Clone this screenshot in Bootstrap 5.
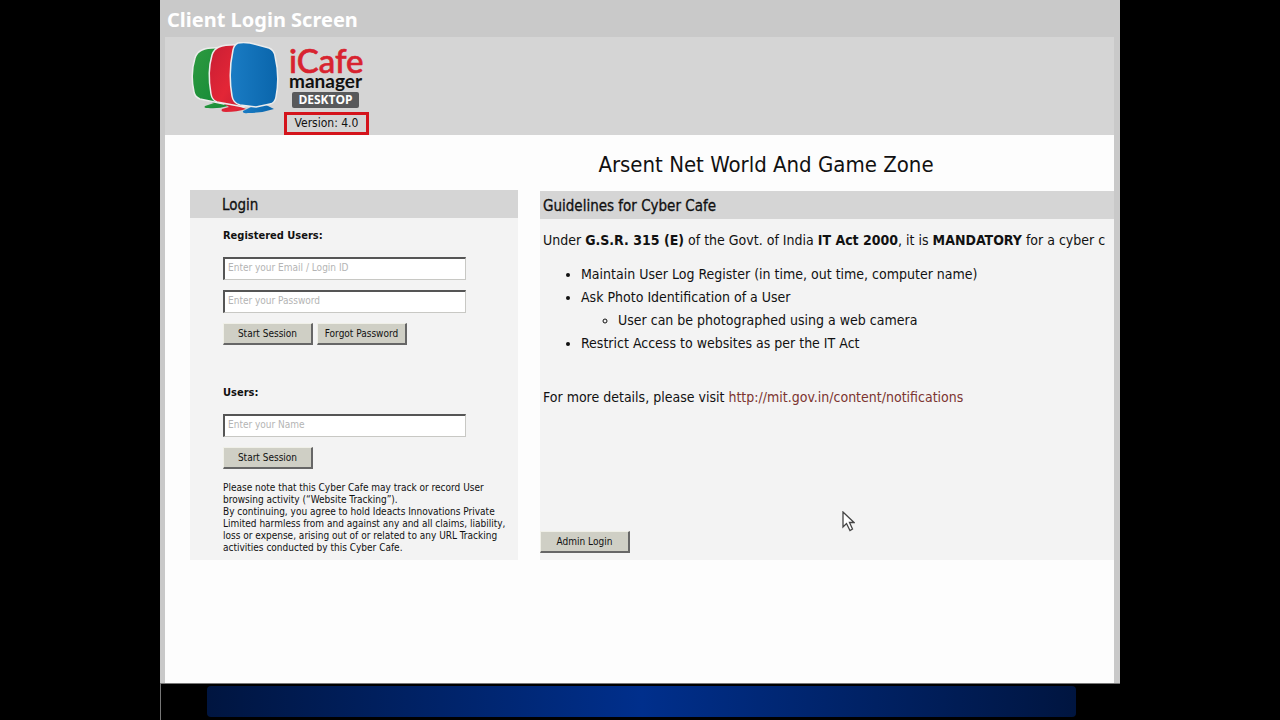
<!DOCTYPE html>
<html lang="en">
<head>
<meta charset="utf-8">
<meta name="viewport" content="width=device-width, initial-scale=1">
<title>iCafe Manager - Client Login Screen</title>
<link href="https://cdn.jsdelivr.net/npm/bootstrap@5.3.0/dist/css/bootstrap.min.css" rel="stylesheet">
<style>
  body { background: #000; color: #111; font: 10px/12px "DejaVu Sans Condensed", "DejaVu Sans", sans-serif; }
  .client { background: #fdfdfd; border: solid #c9c9c9; border-width: 0 6px 0 5px; }
  .client-title { background: #c9c9c9; color: #fff; font: bold 20px/24px "Noto Sans", sans-serif; padding: 8px 2px 5px; margin: 0; }
  .brand-bar { background: #d5d5d5; padding: 5px 25px 0; height: 98px; gap: 2px; }
  .brand-copy { padding: 4px 0 4px 5px; }
  .brand-red { color: #d8232f; font: 500 33px/28px "Lato", sans-serif; -webkit-text-stroke: 0.6px; }
  .brand-name { font: bold 19px/14px "Lato", sans-serif; }
  .edition { background: #58595b; color: #fff; font: bold 12px/16px "Open Sans", sans-serif; border-radius: 2px; width: 67px; margin: 4px 0 0 3px; }
  .version { border: 3px solid #d4141c; width: 85px; height: 23px; line-height: 17px; font-size: 12px; }
  .work { padding: 14px 0 0 25px; min-height: 548px; gap: 22px; }
  .shop { font-size: 22px; line-height: 32px; margin: 0 122px 10px 0; }
  .panel { background: #f3f3f3; }
  .panel-title { background: #d5d5d5; font-size: 15px; line-height: 26px; margin: 0; padding: 2px 0 0 3px; -webkit-text-stroke: 0.3px; font-weight: 400; }
  .login-panel { width: 328px; margin-top: 41px; }
  .login-panel .panel-title { padding-left: 32px; }
  .login-body { height: 342px; padding: 10px 0 0 33px; }
  .login-body form { display: flex; flex-direction: column; align-items: flex-start; gap: 10px; }
  .login-body form + form { margin-top: 40px; }
  .group-title { font-size: 11px; line-height: 16px; font-weight: bold; margin-bottom: 3px; }
  .note { margin: 13px 0 0; white-space: nowrap; }
  .field { width: 243px; height: 23px; border: 1px solid #c8c8c4; border-top: 2px solid #555; border-left: 2px solid #555; background: #fff; font: inherit; padding: 0 3px 3px; border-radius: 0; }
  .field::placeholder { color: #b4b4b4; opacity: 1; }
  .key { width: 90px; height: 22px; border: 1px solid #f0f0e8; border-right: 2px solid #666; border-bottom: 2px solid #666; border-radius: 0; background: #cfcfc5; color: #111; font: 10px/12px "DejaVu Sans Condensed", "DejaVu Sans", sans-serif; padding: 0; white-space: nowrap; }
  .guides { height: 341px; padding: 11px 0 7px; font-size: 14px; line-height: 20px; overflow: hidden; white-space: nowrap; }
  .guides .body-copy { padding-left: 3px; }
  .guides ul { line-height: 23px; }
  .guides ul.rules { padding-left: 38px; margin: 13px 0 32px; }
  .guides ul ul { padding-left: 37px; }
  .guides a { color: #7c3430; text-decoration: none; }
  .dock { border-top: 1px solid #777; border-left: 1px solid #777; padding: 2px 44px 3px 46px; background: #000; }
  .dock-bar { height: 31px; border-radius: 4px; background: linear-gradient(90deg, #001540, #002f8c 50%, #001540); }
  .pointer { left: 682px; top: 511px; }
</style>
</head>
<body>
<div class="container-fluid p-0">
  <div class="col-9 mx-auto position-relative">
    <main class="client">
      <h1 class="client-title">Client Login Screen</h1>
      <header class="brand-bar d-flex">
        <svg width="92" height="74" viewBox="0 0 92 74" aria-hidden="true">
          <defs>
            <linearGradient id="g" x2="1" y2="1"><stop stop-color="#2f9a40"/><stop offset="1" stop-color="#128a36"/></linearGradient>
            <linearGradient id="r" x2="1" y2="1"><stop stop-color="#c81e34"/><stop offset=".6" stop-color="#e32636"/><stop offset="1" stop-color="#c81e34"/></linearGradient>
            <linearGradient id="b"><stop stop-color="#1a7cc4"/><stop offset="1" stop-color="#0a65ab"/></linearGradient>
          </defs>
          <g stroke="#ececec" stroke-width="1.500" stroke-linejoin="round">
            <path fill="url(#g)" stroke="none" d="M19 59L24 61 15 64Q13 66 18 66 28 67 38 64L30 60Z"/>
            <path fill="url(#g)" d="M12 8Q18 5 34 6V62L10 57Q5 55 4 50Q0 32 5 16Q7 10 12 8Z"/>
            <path fill="url(#r)" stroke="none" d="M34 62L39 65 32 67Q30 70 36 70 47 70 56 67L46 63Z"/>
            <path fill="url(#r)" d="M29 5Q36 2 54 3V65L27 60Q22 58 21 52Q17 30 22 13Q24 7 29 5Z"/>
            <path fill="url(#b)" stroke="none" d="M58 62L61 65 53 69Q52 72 58 71 72 71 84 67L74 62Z"/>
            <path fill="url(#b)" d="M48 1Q53 0 60 1L79 6Q84 8 85 14Q90 35 86 55Q85 61 80 62L66 65 50 63Q43 61 42 54Q38 31 43 8Q44 3 48 1Z"/>
          </g>
        </svg>
        <div>
          <div class="brand-copy">
            <div class="brand-red">iCafe</div>
            <div class="brand-name">manager</div>
            <div class="edition text-center">DESKTOP</div>
          </div>
          <div class="version text-center">Version: 4.0</div>
        </div>
      </header>
      <div class="work d-flex">
        <section class="login-panel panel flex-shrink-0 align-self-start">
          <h2 class="panel-title">Login</h2>
          <div class="login-body">
            <form>
              <div class="group-title">Registered Users:</div>
              <input class="field" type="text" placeholder="Enter your Email / Login ID" aria-label="Email or login ID">
              <input class="field" type="password" placeholder="Enter your Password" aria-label="Password">
              <div class="d-flex gap-1"><button class="key" type="button">Start Session</button><button class="key" type="button">Forgot Password</button></div>
            </form>
            <form>
              <label class="group-title" for="guest">Users:</label>
              <input class="field" id="guest" type="text" placeholder="Enter your Name">
              <button class="key" type="button">Start Session</button>
            </form>
            <p class="note">Please note that this Cyber Cafe may track or record User<br>browsing activity (“Website Tracking”).<br>By continuing, you agree to hold Ideacts Innovations Private<br>Limited harmless from and against any and all claims, liability,<br>loss or expense, arising out of or related to any URL Tracking<br>activities conducted by this Cyber Cafe.</p>
          </div>
        </section>
        <section class="flex-grow-1 overflow-hidden">
          <p class="shop text-center">Arsent Net World And Game Zone</p>
          <h2 class="panel-title">Guidelines for Cyber Cafe</h2>
          <div class="guides panel d-flex flex-column">
            <div class="body-copy">
              <div>Under <b>G.S.R. 315 (E)</b> of the Govt. of India <b>IT Act 2000</b>, it is <b>MANDATORY</b> for a cyber c</div>
              <ul class="rules">
                <li>Maintain User Log Register (in time, out time, computer name)</li>
                <li>Ask Photo Identification of a User
                  <ul><li>User can be photographed using a web camera</li></ul>
                </li>
                <li>Restrict Access to websites as per the IT Act</li>
              </ul>
              <div>For more details, please visit <a href="http://mit.gov.in/content/notifications">http://mit.gov.in/content/notifications</a></div>
            </div>
            <form class="mt-auto d-flex"><button class="key" type="button">Admin Login</button></form>
          </div>
        </section>
      </div>
    </main>
    <div class="dock"><div class="dock-bar"></div></div>
    <svg class="pointer position-absolute" width="13" height="21" viewBox="0 0 13 21" aria-hidden="true"><path d="M1 1V16L4.500 12.500 8 19.500 10.500 18 7.500 11.500H12Z" fill="#fff" stroke="#444" stroke-width="1.300"/></svg>
  </div>
</div>
<script src="https://cdn.jsdelivr.net/npm/bootstrap@5.3.0/dist/js/bootstrap.bundle.min.js"></script>
</body>
</html>
